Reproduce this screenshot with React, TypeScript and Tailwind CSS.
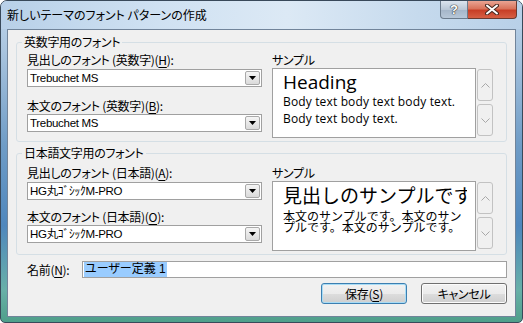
import React from "react";

const jp = "font-['Noto_Sans_CJK_JP',sans-serif] [font-feature-settings:'palt']";
const latin = "font-['Liberation_Sans','Noto_Sans_CJK_JP',sans-serif]";

function Mn({ children }: { children: React.ReactNode }) {
  return <span className="underline underline-offset-[2px]">{children}</span>;
}

function Combo({ value }: { value: string }) {
  return (
    <div className="flex h-[18px] w-[235px] items-center border border-[#a0a0a0] bg-white">
      <span className={`flex-1 pl-[2px] text-[11.5px] leading-[16px] text-black ${latin}`}>{value}</span>
      <div className="mr-[1px] flex h-[14px] w-[15px] items-center justify-center rounded-[2px] border border-[#a9a9a9] bg-[linear-gradient(#f5f5f5,#dadada)]">
        <svg width="7" height="4" viewBox="0 0 7 4">
          <path d="M0 0h7L3.5 4z" fill="#000" />
        </svg>
      </div>
    </div>
  );
}

function ScrollButtons() {
  return (
    <div className="ml-[1px] flex flex-col gap-[3px] pt-[1px]">
      <div className="flex h-[32px] w-[16px] items-center justify-center rounded-[3px] border border-[#c2c2c2] bg-[#f0f0f0]">
        <svg width="9" height="5" viewBox="0 0 9 5">
          <path d="M0.5 4.5L4.5 0.5L8.5 4.5" stroke="#a8a8a8" fill="none" />
        </svg>
      </div>
      <div className="flex h-[32px] w-[16px] items-center justify-center rounded-[3px] border border-[#c2c2c2] bg-[#f0f0f0]">
        <svg width="9" height="5" viewBox="0 0 9 5">
          <path d="M0.5 0.5L4.5 4.5L8.5 0.5" stroke="#a8a8a8" fill="none" />
        </svg>
      </div>
    </div>
  );
}

function GroupBox({ title, className, children }: { title: string; className: string; children: React.ReactNode }) {
  return (
    <div className={`relative rounded-[3px] border border-[#d5dfe5] ${className}`}>
      <span className={`absolute -top-[9px] left-[5px] bg-[#f0f0f0] px-[2px] text-[12px] leading-[16px] ${jp}`}>{title}</span>
      {children}
    </div>
  );
}

export default function App() {
  return (
    <div className="flex h-[323px] w-[523px] flex-col overflow-hidden rounded-t-[7px] rounded-b-[5px] border border-[#39495a] bg-[linear-gradient(#c0d6ec_0%,#aac5df_15%,#6f9cc6_45%,#4f87bd_70%,#68b0a8_90%,#4f9f8a_100%)]">
      {/* title bar */}
      <div className="flex h-[28px] items-start bg-[linear-gradient(90deg,#b8d0e8_0%,#cfe1f2_30%,#dce9f5_55%,#c6daed_80%,#b8d0e8_100%)]">
        <span className={`ml-[6px] mt-[6px] text-[12px] leading-[16px] text-black ${jp}`}>
          新しいテーマのフォント パターンの作成
        </span>
        <div className="ml-auto mr-[5px] flex">
          <div className="flex h-[18px] w-[28px] items-center justify-center rounded-bl-[4px] border border-t-0 border-[#6b7b8c] bg-[linear-gradient(#dbe4ee,#b9c7d6_50%,#a4b5c8_51%,#b7c7d8)]">
            <span className="text-[13px] font-bold leading-[14px] text-white [text-shadow:0_0_1px_#333,0_0_1px_#333,0_0_1px_#333] font-['Liberation_Sans',sans-serif]">?</span>
          </div>
          <div className="flex h-[18px] w-[49px] items-center justify-center rounded-br-[4px] border border-l-0 border-t-0 border-[#6b3a30] bg-[linear-gradient(#eaa493,#d9735b_45%,#c83e26_55%,#d65f44)]">
            <svg width="14" height="11" viewBox="0 0 14 11">
              <path d="M2 1.5L12 9.5M12 1.5L2 9.5" stroke="#4a2a22" strokeWidth="4" strokeLinecap="round" />
              <path d="M2 1.5L12 9.5M12 1.5L2 9.5" stroke="#fff" strokeWidth="2" strokeLinecap="round" />
            </svg>
          </div>
        </div>
      </div>

      {/* client area */}
      <div className={`mx-[6px] flex h-[288px] flex-col border border-[#71849a] bg-[#f0f0f0] px-[8px] pt-[12px] text-[12px] tracking-[-0.3px] text-black ${jp}`}>
        <GroupBox title="英数字用のフォント" className="pb-[3px] pl-[10px] pr-[13px] pt-[9px]">
          <div className="flex gap-[10px]">
            <div className="flex w-[235px] flex-col">
              <span className="leading-[16px]">見出しのフォント (英数字)(<Mn>H</Mn>):</span>
              <div className="mt-[1px]">
                <Combo value="Trebuchet MS" />
              </div>
              <span className="mt-[11px] leading-[16px]">本文のフォント (英数字)(<Mn>B</Mn>):</span>
              <Combo value="Trebuchet MS" />
            </div>
            <div className="flex flex-col">
              <span className="leading-[16px]">サンプル</span>
              <div className="flex">
                <div className="h-[70px] w-[204px] overflow-hidden border border-[#a0a0a0] bg-white pl-[10px] pt-[2px] tracking-normal font-['Open_Sans',sans-serif] [font-feature-settings:normal]">
                  <div className="text-[19px] leading-[22px]">Heading</div>
                  <div className="text-[12px] leading-[17px] tracking-[0.15px]">Body text body text body text.</div>
                  <div className="text-[12px] leading-[17px] tracking-[0.15px]">Body text body text.</div>
                </div>
                <ScrollButtons />
              </div>
            </div>
          </div>
        </GroupBox>

        <GroupBox title="日本語文字用のフォント" className="mt-[11px] pb-[3px] pl-[10px] pr-[13px] pt-[11px]">
          <div className="flex gap-[10px]">
            <div className="flex w-[235px] flex-col">
              <span className="leading-[16px]">見出しのフォント (日本語)(<Mn>A</Mn>):</span>
              <div className="mt-[1px]">
                <Combo value="HG丸ｺﾞｼｯｸM-PRO" />
              </div>
              <span className="mt-[9px] leading-[16px]">本文のフォント (日本語)(<Mn>O</Mn>):</span>
              <Combo value="HG丸ｺﾞｼｯｸM-PRO" />
            </div>
            <div className="flex flex-col">
              <span className="leading-[16px]">サンプル</span>
              <div className="flex">
                <div className="h-[70px] w-[204px] border border-[#a0a0a0] bg-white pl-[10px] pr-[8px] pt-[2px] tracking-normal font-['Noto_Sans_CJK_JP',sans-serif] [font-feature-settings:normal]">
                  <div className="overflow-hidden whitespace-nowrap text-[19px] leading-[22px]">見出しのサンプルです</div>
                  <div className="mt-[4px] text-[12px] leading-[11px]">本文のサンプルです。本文のサンプルです。本文のサンプルです。</div>
                </div>
                <ScrollButtons />
              </div>
            </div>
          </div>
        </GroupBox>

        <div className="mt-[6px] flex items-center pl-[11px]">
          <span className="w-[55px] leading-[16px]">名前(<Mn>N</Mn>):</span>
          <div className="flex h-[17px] flex-1 items-center border border-[#a0a0a0] bg-white pl-[1px]">
            <span className={`bg-[#99ccff] px-[1px] text-[12px] leading-[15px] tracking-normal ${latin}`}>ユーザー定義 1</span>
          </div>
        </div>

        <div className="mt-[5px] flex justify-end gap-[14px]">
          <button className="flex h-[21px] w-[86px] items-center justify-center rounded-[3px] border border-[#3c7fb1] bg-[linear-gradient(#f2f2f2_0%,#ebebeb_50%,#dddddd_51%,#cfcfcf_100%)] shadow-[inset_0_0_0_1px_#a9dcf5] text-[12px] leading-[16px]">
            保存(<Mn>S</Mn>)
          </button>
          <button className="flex h-[21px] w-[86px] items-center justify-center rounded-[3px] border border-[#707070] bg-[linear-gradient(#f2f2f2_0%,#ebebeb_50%,#dddddd_51%,#cfcfcf_100%)] shadow-[inset_0_0_0_1px_#fcfcfc] text-[12px] leading-[16px]">
            キャンセル
          </button>
        </div>
      </div>
    </div>
  );
}
